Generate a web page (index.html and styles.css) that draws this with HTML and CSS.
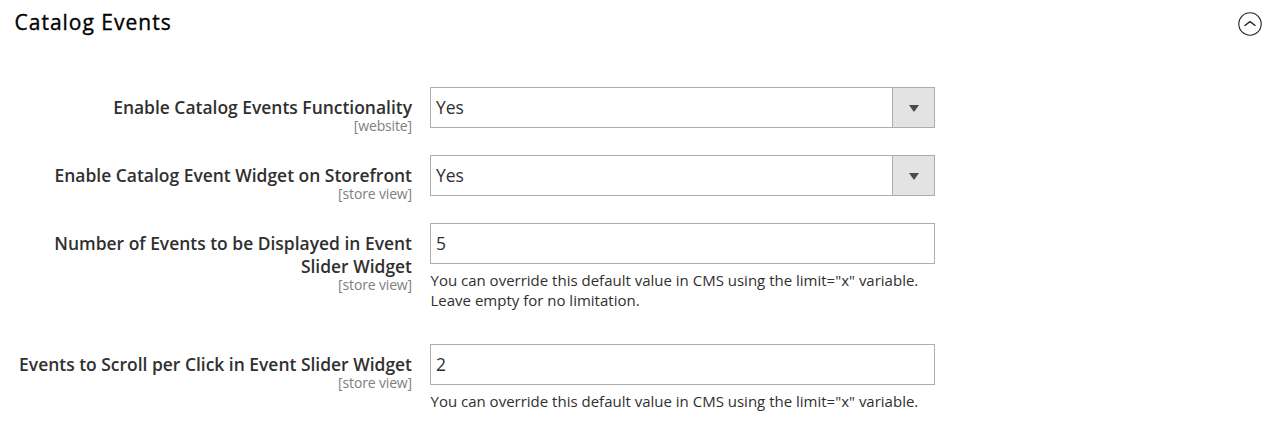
FILE: index.html
```html
<!DOCTYPE html>
<html lang="en"><head><meta charset="utf-8"><title>Catalog Events</title><link rel="stylesheet" href="styles.css"></head>
<body>
<header class="section-head"><h1 class="title">Catalog Events</h1>
<svg class="collapse" width="24" height="24" viewBox="0 0 24 24" fill="none" stroke="#222"><circle cx="12" cy="12" r="11.2" stroke-width="1.1"/><path d="M6.5 13.7 12 9.7l5.5 4" stroke-width="1.4"/></svg></header>
<main class="fields">
<div class="field short"><div class="label"><span class="name">Enable Catalog Events Functionality</span><span class="scope">[website]</span></div><div class="value"><div class="control select"><span class="text">Yes</span><span class="arrow"></span></div></div></div>
<div class="field short"><div class="label"><span class="name">Enable Catalog Event Widget on Storefront</span><span class="scope">[store view]</span></div><div class="value"><div class="control select"><span class="text">Yes</span><span class="arrow"></span></div></div></div>
<div class="field tall"><div class="label"><span class="name">Number of Events to be Displayed in Event<br>Slider Widget</span><span class="scope">[store view]</span></div><div class="value"><div class="control"><span class="text">5</span></div><p class="note">You can override this default value in CMS using the limit="x" variable.<br>Leave empty for no limitation.</p></div></div>
<div class="field"><div class="label"><span class="name">Events to Scroll per Click in Event Slider Widget</span><span class="scope">[store view]</span></div><div class="value"><div class="control"><span class="text">2</span></div><p class="note">You can override this default value in CMS using the limit="x" variable.</p></div></div>
</main></body></html>
```
FILE: styles.css
```css
* { box-sizing: border-box; }
body { margin: 0; height: 428px; overflow: hidden; background: #fff; color: #303030; font-family: "Open Sans", sans-serif; }
.section-head { height: 87px; padding: 7px 13px 0 14.5px; display: flex; justify-content: space-between; align-items: flex-start; }
.title { margin: 0; font-size: 21px; line-height: 30px; font-weight: 400; letter-spacing: 1px; color: #000; -webkit-text-stroke: .35px #000; }
.collapse { margin-top: 5px; }
.field { display: flex; gap: 18px; }
.short { height: 68px; }
.tall { height: 121px; }
.label { width: 412px; padding-top: 9px; text-align: right; display: flex; flex-direction: column; white-space: nowrap; }
.name { font-size: 17.45px; line-height: 23px; font-weight: 600; }
.scope { font-size: 14px; line-height: 14px; letter-spacing: -.15px; color: #808080; }
.value { width: 505px; }
.control { height: 41px; border: 1px solid #adadad; display: flex; justify-content: space-between; align-items: center; }
.text { padding: 0 0 2px 5px; font-size: 17.5px; line-height: 24px; }
.arrow { width: 42px; height: 39px; padding-top: 2px; background: #e3e3e3; border-left: 1px solid #adadad; display: flex; align-items: center; justify-content: center; }
.arrow::before { content: ""; border: 5px solid transparent; border-top: 7px solid #514943; border-bottom: 0; }
.note { margin: 6px 0 0 .5px; font-size: 15px; line-height: 20px; white-space: nowrap; }
```
